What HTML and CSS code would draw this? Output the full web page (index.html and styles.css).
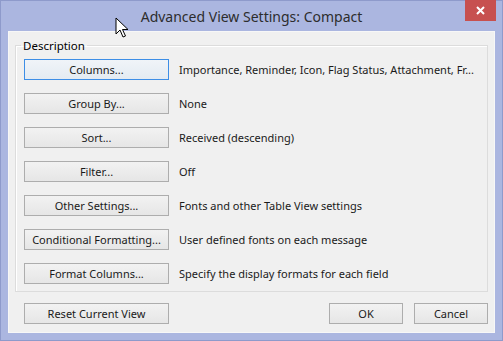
FILE: index.html
```html
<!DOCTYPE html>
<html lang="en">
<head>
    <meta charset="UTF-8">
    <title>Advanced View Settings: Compact</title>
    <link rel="stylesheet" href="styles.css">
</head>
<body>
    <div class="dialog">
        <div class="titlebar">
            <span></span>
            <h1 class="title">Advanced View Settings: Compact</h1>
            <button class="close">
                <svg width="11" height="9" viewBox="0 0 11 9"><path d="M2 1 L9 8 M9 1 L2 8" stroke="#fff" stroke-width="2"/></svg>
            </button>
        </div>
        <div class="content">
            <fieldset class="group">
                <legend>Description</legend>
                <div class="row"><button class="btn focus">Columns...</button><span>Importance, Reminder, Icon, Flag Status, Attachment, Fr...</span></div>
                <div class="row"><button class="btn">Group By...</button><span>None</span></div>
                <div class="row"><button class="btn">Sort...</button><span>Received (descending)</span></div>
                <div class="row"><button class="btn">Filter...</button><span>Off</span></div>
                <div class="row"><button class="btn">Other Settings...</button><span>Fonts and other Table View settings</span></div>
                <div class="row"><button class="btn">Conditional Formatting...</button><span>User defined fonts on each message</span></div>
                <div class="row"><button class="btn">Format Columns...</button><span>Specify the display formats for each field</span></div>
            </fieldset>
            <div class="footer">
                <button class="btn">Reset Current View</button>
                <div class="spacer"></div>
                <button class="btn small">OK</button>
                <button class="btn small">Cancel</button>
            </div>
        </div>
    </div>
    <svg class="cursor" width="14" height="22" viewBox="0 0 14 22">
        <path d="M1 1 L1 17 L5 13 L8 20 L10.5 19 L7.5 12.5 L13 12.5 Z" fill="#fff" stroke="#000" stroke-width="1" stroke-linejoin="miter"/>
    </svg>
</body>
</html>
```

FILE: styles.css
```css
body {
    margin: 0;
    background: #fff;
    font-family: "Noto Sans", "Open Sans", sans-serif;
    font-size: 11px;
    color: #1a1a1a;
}

.dialog {
    width: 503px;
    height: 341px;
    box-sizing: border-box;
    background: #abb6e0;
    border: 1px solid #8e9acb;
    display: flex;
    flex-direction: column;
}

.titlebar {
    height: 30px;
    display: grid;
    grid-template-columns: 1fr auto 1fr;
    align-items: start;
}

.title {
    margin: 0;
    padding-top: 6px;
    font-size: 14px;
    font-weight: normal;
    color: #2d2d2d;
    line-height: 19px;
}

.close {
    justify-self: end;
    margin: -1px 6px 0 0;
    width: 31px;
    height: 21px;
    border: none;
    padding: 0;
    background: #c7504f;
    display: flex;
    align-items: center;
    justify-content: center;
}

.content {
    margin: 0 7px 0 7px;
    height: 302px;
    background: #f0f0f0;
    border: 1px solid #f7f7f7;
    box-sizing: border-box;
    display: flex;
    flex-direction: column;
}

.group {
    min-width: 0;
    margin: 6px 6px 0 6px;
    padding: 6px 0 7px 8px;
    border: 1px solid #dcdcdc;
    box-shadow: inset 1px 1px 0 #fff;
    display: flex;
    flex-direction: column;
    gap: 13px;
}

.group legend {
    padding: 0 2px;
    margin-left: -3px;
    line-height: 15px;
    font-size: 11.5px;
    color: #000;
}

.row {
    display: flex;
    align-items: center;
    gap: 10px;
    white-space: nowrap;
    overflow: hidden;
}

.btn {
    width: 145px;
    height: 21px;
    padding: 0;
    font-family: inherit;
    font-size: 11px;
    color: #1a1a1a;
    border: 1px solid #adadad;
    background: linear-gradient(#f2f2f2, #e6e6e6);
    flex-shrink: 0;
}

.btn.focus {
    border-color: #3d8ee6;
    background: linear-gradient(#f0f4f8, #e4ebf2);
}

.btn.small {
    width: 74px;
}

.footer {
    display: flex;
    gap: 11px;
    margin-top: 11px;
    padding: 0 6px 0 15px;
}

.spacer {
    flex: 1;
}

.cursor {
    position: absolute;
    left: 115px;
    top: 17px;
}
```
